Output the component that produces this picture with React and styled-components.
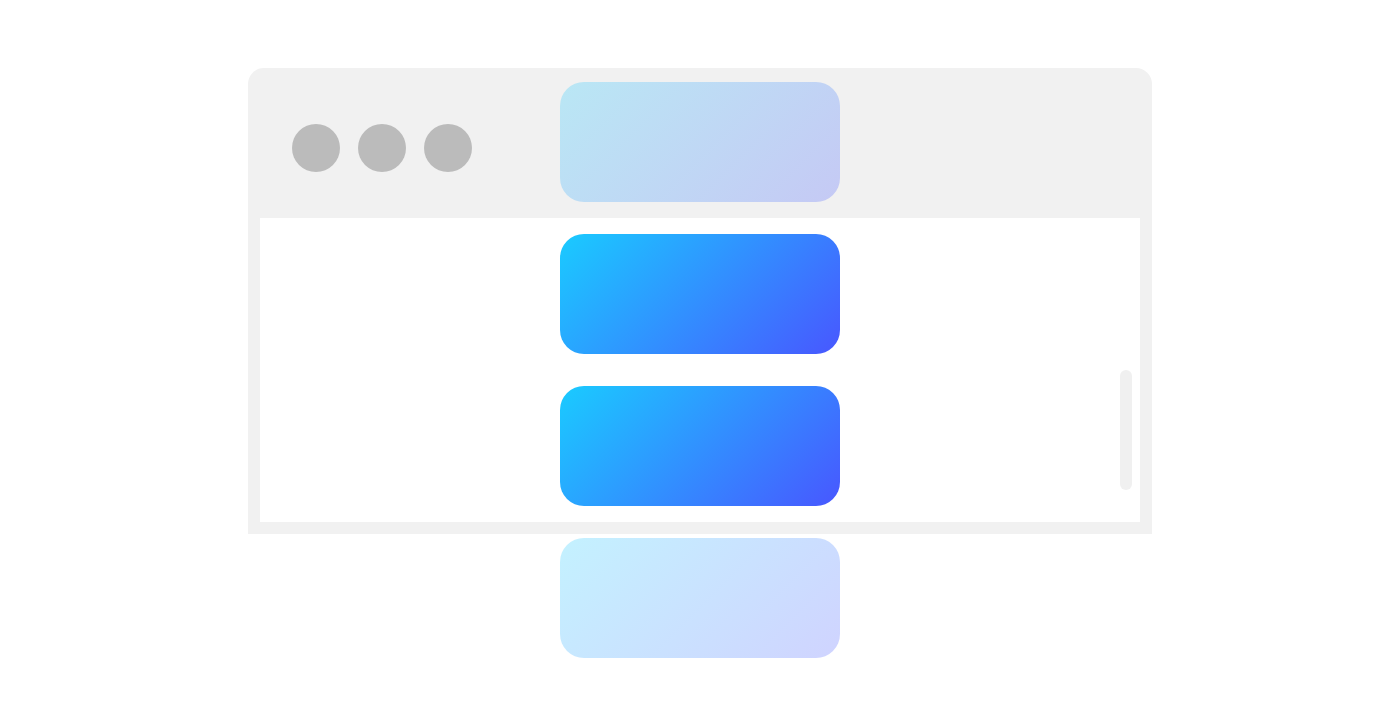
import React from "react";
import styled, { createGlobalStyle } from "styled-components";

const Global = createGlobalStyle`
  html, body { margin: 0; padding: 0; background: #ffffff; }
  body { font-family: "Liberation Sans", Arial, sans-serif; }
`;

const Page = styled.div`
  width: 1400px;
  height: 720px;
  display: flex;
  justify-content: center;
  padding-top: 68px;
  box-sizing: border-box;
`;

const Stage = styled.div`
  display: grid;
  width: 904px;
  height: 590px;
  align-self: flex-start;
`;

const Window = styled.div`
  grid-area: 1 / 1;
  height: 466px;
  background: #f1f1f1;
  border-radius: 16px 16px 0 0;
  display: flex;
  flex-direction: column;
`;

const Toolbar = styled.div`
  height: 150px;
  box-sizing: border-box;
  display: flex;
  align-items: center;
  gap: 18px;
  padding: 10px 0 0 44px;
`;

const Dot = styled.span`
  width: 48px;
  height: 48px;
  border-radius: 50%;
  background: #bbbbbb;
`;

const Content = styled.div`
  flex: 1;
  margin: 0 12px 12px;
  background: #ffffff;
  display: flex;
  justify-content: flex-end;
  align-items: flex-start;
  padding: 152px 8px 0 0;
`;

const Scrollbar = styled.div`
  width: 12px;
  height: 120px;
  border-radius: 6px;
  background: #f0f0f0;
`;

const CardColumn = styled.div`
  grid-area: 1 / 1;
  justify-self: center;
  margin-top: 14px;
  display: flex;
  flex-direction: column;
  gap: 32px;
  z-index: 1;
`;

const Card = styled.div`
  width: 280px;
  height: 120px;
  border-radius: 24px;
  background: linear-gradient(135deg, #1acbff 0%, #4857ff 100%);
  opacity: ${(p) => (p.$faded ? 0.26 : 1)};
`;

export default function App() {
  const cards = [true, false, false, true];
  return (
    <>
      <Global />
      <Page>
        <Stage>
          <Window>
            <Toolbar>
              <Dot />
              <Dot />
              <Dot />
            </Toolbar>
            <Content>
              <Scrollbar />
            </Content>
          </Window>
          <CardColumn>
            {cards.map((f, i) => (
              <Card key={i} $faded={f} />
            ))}
          </CardColumn>
        </Stage>
      </Page>
    </>
  );
}
